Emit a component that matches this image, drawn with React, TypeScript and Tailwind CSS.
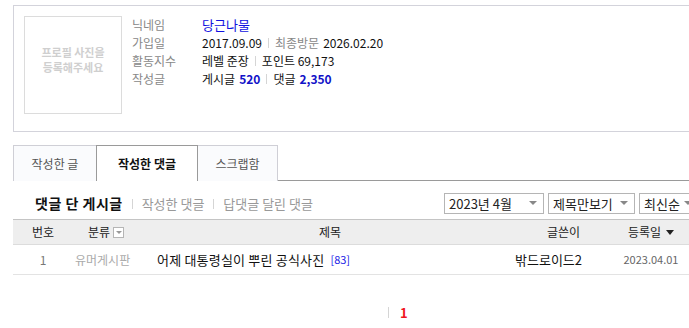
const font = { fontFamily: '"Noto Sans CJK KR", "Noto Sans", sans-serif' };

function Sep() {
  return <span className="mx-[6px] inline-block h-[10px] w-px bg-[#d5d5d5] align-middle" />;
}

function SelectBox({ label, width }: { label: string; width: string }) {
  return (
    <div
      className={`flex h-[21px] ${width} shrink-0 items-center justify-between border border-[#b5b5b5] bg-white pl-[4px] pr-[6px] text-[13px] leading-none text-[#222]`}
    >
      <span>{label}</span>
      <span className="h-0 w-0 border-x-[4px] border-t-[4px] border-x-transparent border-t-[#888]" />
    </div>
  );
}

export default function App() {
  return (
    <div className="h-[328px] w-[689px] overflow-hidden bg-white" style={font}>
      <div className="ml-[13px] w-[700px] pt-[5px] text-[12px] text-[#111]">
        {/* profile */}
        <div className="flex h-[127px] border border-[#d3d3db] pl-[10px] pt-[10px]">
          <div className="flex h-[98px] w-[98px] shrink-0 flex-col items-center justify-center border border-[#dcdcdc] pb-[10px] text-[11px] font-bold leading-[15px] text-[#cfcfcf]">
            <span>프로필 사진을</span>
            <span>등록해주세요</span>
          </div>
          <div className="ml-[10px] leading-[18px]">
            <div className="flex">
              <span className="w-[70px] text-[#888]">닉네임</span>
              <span className="text-[13px] text-[#1010e0]">당근나물</span>
            </div>
            <div className="flex items-center">
              <span className="w-[70px] text-[#888]">가입일</span>
              <span>2017.09.09</span>
              <Sep />
              <span className="text-[#888]">최종방문</span>
              <span className="ml-[4px]">2026.02.20</span>
            </div>
            <div className="flex items-center">
              <span className="w-[70px] text-[#888]">활동지수</span>
              <span>레벨 준장</span>
              <Sep />
              <span>포인트 69,173</span>
            </div>
            <div className="flex items-center">
              <span className="w-[70px] text-[#888]">작성글</span>
              <span>게시글</span>
              <span className="ml-[4px] font-bold text-[#1212c8]">520</span>
              <Sep />
              <span>댓글</span>
              <span className="ml-[4px] font-bold text-[#1212c8]">2,350</span>
            </div>
          </div>
        </div>

        {/* tabs */}
        <div className="mt-[13px] flex h-[36px] border-b border-[#9a9a9a]">
          <div className="flex h-[36px] w-[83px] items-center justify-center border-l border-t border-[#cfcfd6] bg-[#fafbfd] text-[#555]">
            작성한 글
          </div>
          <div className="-mb-px flex h-[36px] w-[102px] items-center justify-center border-x border-t border-[#9a9a9a] bg-white font-bold text-[#111]">
            작성한 댓글
          </div>
          <div className="flex h-[36px] w-[80px] items-center justify-center border-r border-t border-[#cfcfd6] bg-[#fafbfd] text-[#555]">
            스크랩함
          </div>
        </div>

        {/* sub nav + selects */}
        <div className="flex items-center pb-[5px] pt-[11px]">
          <div className="flex flex-1 items-center pl-[22px] pt-[1px]">
            <span className="text-[14px] font-bold tracking-[0.5px] text-[#111]">댓글 단 게시글</span>
            <span className="mx-[9px] inline-block h-[10px] w-px bg-[#d5d5d5]" />
            <span className="text-[13px] text-[#999]">작성한 댓글</span>
            <span className="mx-[9px] inline-block h-[10px] w-px bg-[#d5d5d5]" />
            <span className="text-[13px] text-[#999]">답댓글 달린 댓글</span>
          </div>
          <div className="mr-[14px] flex gap-[4px]">
            <SelectBox label="2023년 4월" width="w-[100px]" />
            <SelectBox label="제목만보기" width="w-[87px]" />
            <SelectBox label="최신순" width="w-[60px]" />
          </div>
        </div>

        {/* table header */}
        <div className="flex h-[26px] items-center border-b border-t border-b-[#dcdcdc] border-t-[#c4c4c4] bg-[#eeeeee] text-[#222]">
          <div className="w-[60px] text-center">번호</div>
          <div className="flex w-[72px] items-center pl-[15px]">
            <span>분류</span>
            <span className="ml-[3px] flex h-[11px] w-[11px] items-center justify-center border border-[#b5b5b5] bg-white">
              <span className="h-0 w-0 border-x-[3px] border-t-[3px] border-x-transparent border-t-[#999]" />
            </span>
          </div>
          <div className="w-[370px] text-center">제목</div>
          <div className="w-[97px] text-center">글쓴이</div>
          <div className="flex w-[78px] items-center justify-center">
            <span>등록일</span>
            <span className="ml-[5px] h-0 w-0 border-x-[4px] border-t-[5px] border-x-transparent border-t-[#222]" />
          </div>
        </div>

        {/* row */}
        <div className="flex h-[30px] items-center border-b border-[#e3e3e3]">
          <div className="w-[60px] text-center text-[#777]">1</div>
          <div className="w-[72px] pl-[2px] text-[#aaa]">유머게시판</div>
          <div className="flex w-[370px] items-center pl-[12px]">
            <span className="text-[13px] tracking-[0.2px] text-[#111]">어제 대통령실이 뿌린 공식사진</span>
            <span className="ml-[6px] text-[11px] text-[#1a1ae6]">[83]</span>
          </div>
          <div className="w-[97px] text-[13px] text-[#111]">밖드로이드2</div>
          <div className="w-[78px] text-center text-[11px] text-[#666]">2023.04.01</div>
        </div>

        {/* pagination */}
        <div className="mt-[31px] flex items-center pl-[375px]">
          <span className="inline-block h-[11px] w-px bg-[#d5d5d5]" />
          <span className="ml-[11px] text-[13px] font-bold leading-none text-[#f0141e]">1</span>
        </div>
      </div>
    </div>
  );
}
